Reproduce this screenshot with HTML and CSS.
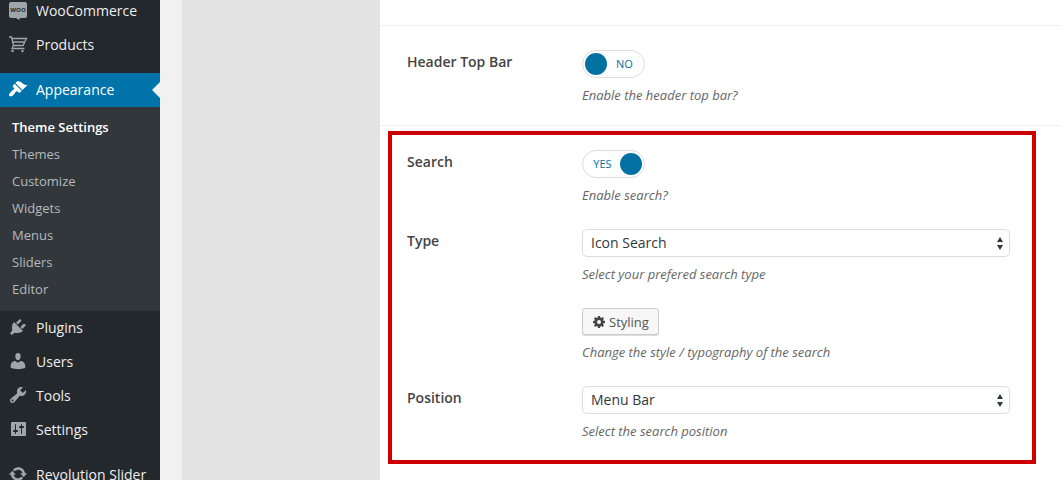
FILE: index.html
```html
<!DOCTYPE html>
<html lang="en">
<head>
    <meta charset="UTF-8">
    <meta name="viewport" content="width=device-width, initial-scale=1.0">
    <title>Theme Settings</title>
    <link rel="stylesheet" href="styles.css">
</head>
<body>

<nav class="admin-menu">
    <ul class="menu">
        <li><a href="#" class="menu-link">
            <svg class="icon" viewBox="0 0 20 20"><path d="M3 2h14q2 0 2 2v12q0 2-2 2h-5l-1 2-3-2H3q-2 0-2-2V4q0-2 2-2z"/><text class="woo" x="10" y="12" text-anchor="middle">WOO</text></svg>
            WooCommerce</a></li>
        <li><a href="#" class="menu-link">
            <svg class="icon" viewBox="0 0 20 20"><path class="line" d="M1 3h2.500l2 8.500h9.500L18.500 4.500H4M4.500 8h12M5.500 11.500l-1.500 3h12.500"/><circle cx="4.500" cy="17" r="1.200"/><circle cx="14.500" cy="17" r="1.200"/></svg>
            Products</a></li>
        <li class="separator"></li>
        <li><a href="#" class="menu-link current">
            <svg class="icon" viewBox="0 0 20 20"><path d="M14.480 11.060L7.410 3.990l1.500-1.500c.5-.56 2.300-.47 3.510.32 1.210.8 1.430 1.280 2.910 2.100 1.180.64 2.450 1.260 4.450.85zm-.71.71L6.700 4.700 4.930 6.470c-.39.39-.39 1.020 0 1.410l1.060 1.060c.39.39.39 1.030 0 1.420-.6.6-1.430 1.110-2.210 1.690-.35.26-.7.53-1.010.84C1.430 14.230.4 16.080 1.400 17.070c.99 1 2.840-.03 4.180-1.360.31-.31.58-.66.85-1.020.57-.78 1.080-1.610 1.690-2.210.39-.39 1.020-.39 1.410 0l1.060 1.060c.39.39 1.020.39 1.410 0z"/></svg>
            Appearance</a>
            <ul class="submenu">
                <li><a href="#" class="active">Theme Settings</a></li>
                <li><a href="#">Themes</a></li>
                <li><a href="#">Customize</a></li>
                <li><a href="#">Widgets</a></li>
                <li><a href="#">Menus</a></li>
                <li><a href="#">Sliders</a></li>
                <li><a href="#">Editor</a></li>
            </ul>
        </li>
        <li><a href="#" class="menu-link">
            <svg class="icon" viewBox="0 0 20 20"><path d="M13.110 4.360L9.870 7.600 8 5.730l3.240-3.240c.35-.34 1.050-.2 1.560.32.52.51.66 1.210.31 1.550zm-8 1.770l.91-1.120 9.010 9.010-1.190.84c-.71.71-2.630 1.160-3.820 1.160H6.140L4.900 17.260c-.59.59-1.540.59-2.120 0-.59-.58-.59-1.530 0-2.120l1.240-1.240v-3.880c0-1.130.4-3.190 1.090-3.890zm7.260 3.970l3.240-3.240c.34-.35 1.040-.21 1.550.31.52.51.66 1.210.31 1.550l-3.240 3.250z"/></svg>
            Plugins</a></li>
        <li><a href="#" class="menu-link">
            <svg class="icon" viewBox="0 0 20 20"><path d="M10 9.250c-2.270 0-2.730-3.440-2.730-3.440C7 4.020 7.820 2 9.970 2c2.160 0 2.980 2.020 2.710 3.810 0 0-.41 3.440-2.680 3.440zm0 2.570L12.720 10c2.390 0 4.520 2.330 4.520 4.530v2.490s-3.650 1.130-7.240 1.130c-3.650 0-7.240-1.130-7.240-1.130v-2.490c0-2.250 1.940-4.480 4.470-4.480z"/></svg>
            Users</a></li>
        <li><a href="#" class="menu-link">
            <svg class="icon" viewBox="0 0 20 20"><path d="M16.680 9.770c-1.340 1.340-3.300 1.670-4.950.99l-5.410 6.520c-.99.99-2.590.99-3.580 0s-.99-2.590 0-3.570l6.520-5.420c-.68-1.650-.35-3.610.99-4.950 1.280-1.280 3.120-1.620 4.720-1.060l-2.890 2.890 2.820 2.820 2.860-2.870c.53 1.580.18 3.390-1.080 4.650zM3.810 16.210c.4.39 1.040.39 1.430 0 .4-.4.4-1.040 0-1.430-.39-.4-1.030-.4-1.430 0-.39.39-.39 1.030 0 1.430z"/></svg>
            Tools</a></li>
        <li><a href="#" class="menu-link">
            <svg class="icon" viewBox="0 0 20 20"><path fill-rule="evenodd" d="M18 16V4c0-.55-.45-1-1-1H4c-.55 0-1 .45-1 1v12c0 .55.45 1 1 1h13c.55 0 1-.45 1-1zM8 11h1c.55 0 1 .45 1 1s-.45 1-1 1H8v1.500c0 .28-.22.5-.5.5s-.5-.22-.5-.5V13H6c-.55 0-1-.45-1-1s.45-1 1-1h1V5.500c0-.28.22-.5.5-.5s.5.22.5.5V11zm5-2h-1c-.55 0-1-.45-1-1s.45-1 1-1h1V5.500c0-.28.22-.5.5-.5s.5.22.5.5V7h1c.55 0 1 .45 1 1s-.45 1-1 1h-1v5.500c0 .28-.22.5-.5.5s-.5-.22-.5-.5V9z"/></svg>
            Settings</a></li>
        <li class="separator"></li>
        <li><a href="#" class="menu-link">
            <svg class="icon" viewBox="0 0 20 20"><path d="M10.200 3.280c3.530 0 6.430 2.610 6.920 6h2.080l-3.500 4-3.500-4h2.320c-.45-1.970-2.210-3.450-4.320-3.450-1.450 0-2.730.71-3.540 1.780L4.950 5.660C6.230 4.200 8.110 3.280 10.200 3.280zm-.4 13.440c-3.520 0-6.430-2.610-6.920-6H.8l3.500-4c1.170 1.330 2.330 2.670 3.500 4H5.480c.45 1.970 2.210 3.450 4.320 3.450 1.450 0 2.730-.71 3.540-1.780l1.710 1.950c-1.280 1.460-3.150 2.380-5.250 2.380z"/></svg>
            Revolution Slider</a></li>
    </ul>
</nav>

<div class="panel-tabs"></div>

<main class="settings">
    <section class="option-group">
        <div class="row">
            <label class="row-label" for="top-bar">Header Top Bar</label>
            <div class="field">
                <label class="switch">
                    <input type="checkbox" id="top-bar">
                    <span class="off">NO</span><span class="on">YES</span>
                </label>
                <p class="description">Enable the header top bar?</p>
            </div>
        </div>
    </section>

    <section class="highlight">
        <div class="row">
            <label class="row-label" for="search">Search</label>
            <div class="field">
                <label class="switch">
                    <input type="checkbox" id="search" checked>
                    <span class="off">NO</span><span class="on">YES</span>
                </label>
                <p class="description">Enable search?</p>
            </div>
        </div>
        <div class="row">
            <label class="row-label" for="type">Type</label>
            <div class="field">
                <select id="type">
                    <option>Icon Search</option>
                </select>
                <p class="description">Select your prefered search type</p>
            </div>
        </div>
        <div class="row">
            <div class="row-label"></div>
            <div class="field">
                <button type="button" class="styling">
                    <svg class="gear" viewBox="0 0 12 12"><path fill-rule="evenodd" d="M5 0h2l.3 1.500 1 .4L9.600 1 11 2.400l-.9 1.300.4 1L12 5v2l-1.500.3-.4 1 .9 1.300L9.600 11l-1.300-.9-1 .4L7 12H5l-.3-1.500-1-.4-1.300.9L1 9.600l.9-1.300-.4-1L0 7V5l1.500-.3.4-1L1 2.400 2.400 1l1.300.9 1-.4zM6 4a2 2 0 1 0 0 4 2 2 0 0 0 0-4z"/></svg>
                    Styling
                </button>
                <p class="description">Change the style / typography of the search</p>
            </div>
        </div>
        <div class="row">
            <label class="row-label" for="position">Position</label>
            <div class="field">
                <select id="position">
                    <option>Menu Bar</option>
                </select>
                <p class="description">Select the search position</p>
            </div>
        </div>
    </section>
</main>

</body>
</html>
```
FILE: styles.css
```css
* {
    box-sizing: border-box;
}

body {
    font-family: 'Open Sans', sans-serif;
    font-size: 14px;
    background-color: #f1f1f1;
    color: #444;
    display: flex;
    height: 100vh;
    margin: 0;
    overflow: hidden;
}

ul {
    list-style: none;
    margin: 0;
    padding: 0;
}

/* Admin menu */
.admin-menu {
    flex: none;
    width: 160px;
    background-color: #23282d;
}

.menu {
    margin-top: -6px;
}

.menu-link {
    position: relative;
    display: flex;
    align-items: center;
    gap: 8px;
    height: 34px;
    padding: 0 0 2px 8px;
    color: #eee;
    font-weight: 500;
    text-decoration: none;
    white-space: nowrap;
}

.menu-link.current {
    background-color: #0073aa;
    color: #fff;
}

/* Notch pointing at the open page */
.menu-link.current::after {
    content: '';
    position: absolute;
    right: 0;
    top: 9px;
    border: 8px solid transparent;
    border-left-width: 0;
    border-right-color: #f1f1f1;
}

.separator {
    height: 11px;
}

.icon {
    flex: none;
    width: 20px;
    height: 20px;
    fill: #a0a5aa;
}

.current .icon {
    fill: #fff;
}

.icon .line {
    fill: none;
    stroke: #a0a5aa;
    stroke-width: 1.3;
}

.icon .woo {
    fill: #23282d;
    font-size: 6px;
    font-weight: 700;
}

.submenu {
    padding: 7px 0 8px;
    background-color: #32373c;
}

.submenu a {
    display: block;
    padding: 0 12px;
    color: #b4b9be;
    font-size: 13px;
    font-weight: 500;
    line-height: 27px;
    text-decoration: none;
}

.submenu a.active {
    color: #fff;
    font-weight: 600;
}

/* Settings panel */
.panel-tabs {
    flex: none;
    width: 198px;
    margin-left: 22px;
    background-color: #e3e3e3;
}

.settings {
    flex: 1;
    padding-top: 25px;
    background-color: #fff;
}

.option-group {
    padding: 24px 51px 20px 27px;
    border-top: 1px solid #eee;
    border-bottom: 1px solid #eee;
}

.highlight {
    display: flex;
    flex-direction: column;
    gap: 24px;
    margin: 5px 25px 16px 8px;
    padding: 15px 22px 19px 15px;
    border: 4px solid #c00;
}

.row {
    display: flex;
}

.row-label {
    flex: none;
    width: 175px;
    font-weight: 600;
    line-height: 24px;
}

.field {
    flex: 1;
}

.description {
    margin: 7px 0 0;
    color: #666;
    font-size: 13px;
    font-style: italic;
    line-height: 20px;
}

.switch {
    display: flex;
    align-items: center;
    width: 63px;
    height: 28px;
    padding: 0 2px;
    border: 1px solid #ddd;
    border-radius: 14px;
    color: #0071a1;
    font-size: 11px;
    cursor: pointer;
}

.switch input {
    appearance: none;
    width: 22px;
    height: 22px;
    margin: 0;
    border-radius: 50%;
    background-color: #0071a1;
    cursor: pointer;
}

.switch span {
    flex: 1;
    padding-bottom: 2px;
    text-align: center;
}

.switch .on,
.switch:has(:checked) .off {
    display: none;
}

.switch:has(:checked) {
    flex-direction: row-reverse;
}

.switch:has(:checked) .on {
    display: block;
}

select {
    appearance: none;
    display: block;
    width: 100%;
    height: 28px;
    padding: 0 24px 2px 8px;
    border: 1px solid #ddd;
    border-radius: 5px;
    background: #fff url("data:image/svg+xml,%3Csvg xmlns='http://www.w3.org/2000/svg' width='6' height='13'%3E%3Cpath fill='%2332373c' d='M0 5l3-5 3 5zM0 8h6l-3 5z'/%3E%3C/svg%3E") no-repeat right 6px center;
    color: #32373c;
    font-family: inherit;
    font-size: 14px;
}

.styling {
    display: flex;
    align-items: center;
    gap: 4px;
    height: 27px;
    padding: 0 9px 0 10px;
    border: 1px solid #ccc;
    border-radius: 3px;
    background-color: #f7f7f7;
    box-shadow: 0 1px 0 #ddd;
    color: #555;
    font-family: inherit;
    font-size: 13px;
    cursor: pointer;
}

.gear {
    width: 12px;
    height: 12px;
    fill: #444;
}
```
